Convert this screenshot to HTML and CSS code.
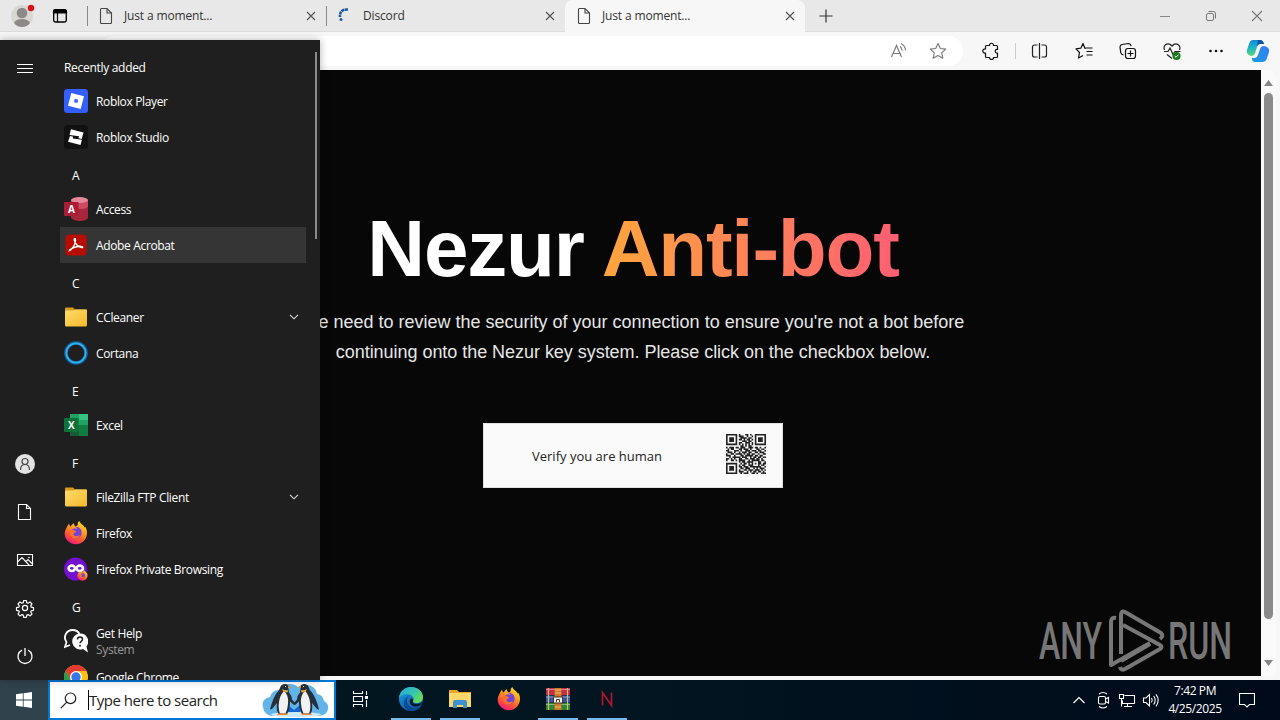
FILE: index.html
```html
<!DOCTYPE html>
<html lang="en">
<head>
    <meta charset="UTF-8">
    <title>Just a moment...</title>
    <link rel="stylesheet" href="styles.css">
</head>
<body>
    <!-- shared icons -->
    <svg class="defs" width="0" height="0">
        <defs>
            <linearGradient id="ffFlame" x1="0.8" y1="0" x2="0.3" y2="1">
                <stop offset="0" stop-color="#ffe226"/>
                <stop offset="0.4" stop-color="#ff9a1f"/>
                <stop offset="0.75" stop-color="#ff4a3c"/>
                <stop offset="1" stop-color="#f0168a"/>
            </linearGradient>
            <linearGradient id="folderFront" x1="0" y1="0" x2="1" y2="1">
                <stop offset="0" stop-color="#ffdc6b"/>
                <stop offset="1" stop-color="#f5b82a"/>
            </linearGradient>
            <linearGradient id="edgeBlue" x1="0" y1="0" x2="0.6" y2="1">
                <stop offset="0" stop-color="#1ea2e0"/>
                <stop offset="1" stop-color="#0b55a5"/>
            </linearGradient>
            <linearGradient id="edgeGreen" x1="0" y1="0" x2="1" y2="0.6">
                <stop offset="0" stop-color="#27a8de"/>
                <stop offset="0.6" stop-color="#35c4b0"/>
                <stop offset="1" stop-color="#66dd55"/>
            </linearGradient>
            <linearGradient id="copA" x1="0" y1="0" x2="0" y2="1">
                <stop offset="0" stop-color="#1686d8"/>
                <stop offset="0.5" stop-color="#20b6c4"/>
                <stop offset="1" stop-color="#5fd57a"/>
            </linearGradient>
            <linearGradient id="copB" x1="1" y1="0" x2="0" y2="1">
                <stop offset="0" stop-color="#3a7df0"/>
                <stop offset="1" stop-color="#169be6"/>
            </linearGradient>
            <symbol id="page" viewBox="0 0 14 18">
                <path d="M1.5 2.5q0-1 1-1H8L12.5 6v9.500q0 1-1 1h-9q-1 0-1-1zM8 1.500V6h4.500" fill="none" stroke="#444" stroke-width="1.100"/>
            </symbol>
            <symbol id="cross" viewBox="0 0 10 10">
                <path d="M1 1l8 8M9 1l-8 8" fill="none" stroke="#555" stroke-width="1.200"/>
            </symbol>
            <symbol id="folder" viewBox="0 0 24 24">
                <path d="M1 3.500q0-1 1-1h7l2 2h11q1 0 1 1V12H1z" fill="#d79a1c"/>
                <path d="M1 6.500q0-1 1-1h7.500l2-1H22q1 0 1 1V20q0 1.500-1.500 1.500h-19Q1 21.500 1 20z" fill="url(#folderFront)"/>
            </symbol>
            <symbol id="firefox" viewBox="0 0 24 24">
                <path d="M2.200 7.500C3 5.500 4 4 5 2.500c.3 1.500.8 2.300 1.600 3C7.500 4 8.500 3 10 2.300c0 1.500.5 2.500 1.700 3.200 1-.6 1.600-1 2-1.500-.3-1.500.3-3 1.600-4 .6 2 2.500 3 4 4.500.7.700 1 1.400 1.200 2l.7-.8c1.300 2 2 4.300 1.800 6.800-.4 6.300-5.200 10.800-11 10.800S.8 18.700.7 12.800c0-2 .5-3.800 1.500-5.300z" fill="url(#ffFlame)"/>
                <path d="M7 9.500c2-2 4-2.300 6.500-1.500-1-1.600-2-2-3-2 4-1 8 2.300 7 7-.7 3.200-3.400 4.700-6 4.500-3.300-.3-5.300-2.800-5-5.200z" fill="#7444d8"/>
                <path d="M6.300 9.500c2-1.300 3.200-.5 4.500.2l1.500.6c-.3 1.200-2.200 1.500-2.700 2.500-.4 1.400 1 2.700 3 2.500 1.500-.2 2.400-1 3.400-.7-1 2.600-4 3.600-6.500 2.700-3-1-4.200-4.800-3.200-7.800z" fill="#ff7129"/>
            </symbol>
            <symbol id="chevron" viewBox="0 0 10 6">
                <path d="M1 .8l4 4 4-4" fill="none" stroke="#ddd" stroke-width="1.100"/>
            </symbol>
            <!-- one penguin, mirrored for its partner -->
            <symbol id="penguin" viewBox="0 0 26 36">
                <path d="M11 6q1-4 5-4 3 0 3.500 2.500 0 4 .5 6 3 3 3 7l4 4.500-2 1-4-3.500q0 8-3 12.500H9.500Q7 29 8 21l-5 6-2 .5q3-12 7-17 2.500-2 3-4.500z" fill="#25303b"/>
                <path d="M15 9q5 4 4 13-.5 6-2.500 9.500H11Q9 27 10 20t5-11z" fill="#f1f1f1"/>
                <path d="M13 7q3 2 6 1l-.5 2.500-4-.5z" fill="#f0a83a"/>
                <path d="M19 4.200l4 1.300-4 .7zM9 31.500h9.500v1.500H8z" fill="#ee8b33"/>
                <circle cx="16.500" cy="4.500" r=".6" fill="#fff"/>
            </symbol>
        </defs>
    </svg>

    <div class="desktop">
        <div class="browser">
            <div class="tabstrip">
                <svg class="profile" width="32" height="32" viewBox="0 0 32 32">
                    <circle cx="16" cy="16" r="11" fill="#d9d6d3"/>
                    <circle cx="16" cy="13" r="5.300" fill="#8d8986"/>
                    <path d="M8 23q2-4 8-4t8 4q-3 4-8 4t-8-4z" fill="#8d8986"/>
                    <circle cx="25" cy="8" r="3.200" fill="#d90f1b"/>
                </svg>
                <svg class="workspaces" width="16" height="16" viewBox="0 0 16 16">
                    <rect x="1.700" y="2" width="12.600" height="12" rx="2" fill="none" stroke="#000" stroke-width="1.300"/>
                    <path d="M1.500 5V3.500q0-2 2-2h9q2 0 2 2V5zM5.500 5v9" stroke="#000" stroke-width="1.200"/>
                </svg>
                <div class="tab first">
                    <svg class="fav" width="14" height="18"><use href="#page"/></svg>
                    <span class="title">Just a moment...</span>
                    <svg width="10" height="10"><use href="#cross"/></svg>
                </div>
                <div class="tab second">
                    <svg class="fav" width="14" height="18" viewBox="0 0 14 18">
                        <path d="M10 2.500Q1.500 2 2 10" fill="none" stroke="#1b5c9e" stroke-width="2.600" stroke-dasharray="3.200 .5"/>
                        <circle cx="3" cy="12.500" r="1.500" fill="#1b5c9e"/>
                    </svg>
                    <span class="title">Discord</span>
                    <svg width="10" height="10"><use href="#cross"/></svg>
                </div>
                <div class="tab active">
                    <svg class="fav" width="14" height="18"><use href="#page"/></svg>
                    <span class="title">Just a moment...</span>
                    <svg width="10" height="10"><use href="#cross"/></svg>
                </div>
                <svg class="newtab" width="14" height="14" viewBox="0 0 14 14">
                    <path d="M7 .5v13M.5 7h13" stroke="#333" stroke-width="1.200"/>
                </svg>
                <div class="winbuttons">
                    <svg width="46" height="32" viewBox="0 0 46 32"><path d="M18 16.500h10" stroke="#888"/></svg>
                    <svg width="46" height="32" viewBox="0 0 46 32">
                        <g fill="none" stroke="#777">
                            <rect x="18.500" y="13.500" width="7" height="7" rx="1.500"/>
                            <path d="M20.500 11.500h5q2 0 2 2v5"/>
                        </g>
                    </svg>
                    <svg width="46" height="32" viewBox="0 0 46 32"><path d="M18 11l10 10M28 11L18 21" stroke="#777" stroke-width="1.100"/></svg>
                </div>
            </div>

            <div class="toolbar">
                <div class="address">
                    <svg width="40" height="30" viewBox="0 0 40 30">
                        <g fill="none" stroke="#777" stroke-width="1.100">
                            <path d="M13.500 21L18.500 9.500 23.500 21M15.200 17.500h6.600"/>
                            <path d="M22 10.500q2 1.500 2 4M23 7.500q4.500 2.500 4.500 7"/>
                        </g>
                    </svg>
                    <svg width="40" height="30" viewBox="0 0 40 30">
                        <path d="M20 7.500l2.300 5 5.400.6-4 3.700 1.100 5.400-4.800-2.700-4.800 2.700 1.100-5.400-4-3.700 5.400-.6z" fill="none" stroke="#777" stroke-width="1.100" stroke-linejoin="round"/>
                    </svg>
                </div>
                <svg class="ext" width="44" height="30" viewBox="0 0 44 30">
                    <path d="M17.500 9.500h3c-.4-3 4.400-3 4 0h3q1 0 1 1v3c-3-.7-3 4 0 3.500v3.500q0 1-1 1h-3c.5 2.600-4.300 2.600-4 0h-3q-1 0-1-1V17c-3.600.5-3.600-4.500 0-4v-2.500q0-1 1-1z" fill="none" stroke="#111" stroke-width="1.200" stroke-linejoin="round"/>
                </svg>
                <span class="sep"></span>
                <svg width="44" height="30" viewBox="0 0 44 30">
                    <path d="M19.500 9H16.500q-2 0-2 2v8q0 2 2 2h3M23.500 9h3q2 0 2 2v8q0 2-2 2h-3M21.500 7v16" fill="none" stroke="#222" stroke-width="1.200"/>
                </svg>
                <svg width="44" height="30" viewBox="0 0 44 30">
                    <path d="M23.500 12.500h-.500l-2-5-2.200 4.700-4.800.6 3.500 3.700-1 5.500 4.500-2.500M23.500 12h7M24.500 15.500h6M24.500 19h6" fill="none" stroke="#111" stroke-width="1.200" stroke-linejoin="round"/>
                </svg>
                <svg width="44" height="30" viewBox="0 0 44 30">
                    <g fill="none" stroke="#111" stroke-width="1.200">
                        <path d="M17.500 19q-2.500-.5-2.800-2.500L14 11q0-2 2-2.500l6.500-1q2 0 2.600 2.500"/>
                        <rect x="19.500" y="12.500" width="10" height="10" rx="2.500"/>
                        <path d="M24.500 14.500v6M21.500 17.500h6"/>
                    </g>
                </svg>
                <svg width="44" height="30" viewBox="0 0 44 30">
                    <path d="M14.500 14q-1.300-3.500 1-5.300Q19 6.500 22 10q3-3.500 6.300-1.300 2.500 2 1.200 5.300M17 18.500l5 4M14 15.500h4l2-3.500 3 6.500 2-3h5.500" fill="none" stroke="#222" stroke-width="1.200"/>
                    <circle cx="26.500" cy="20" r="4" fill="#187a1c"/>
                    <path d="M24.700 20l1.300 1.300 2.400-2.600" fill="none" stroke="#fff"/>
                </svg>
                <svg width="44" height="30" viewBox="0 0 44 30">
                    <g fill="#111"><circle cx="16.500" cy="15" r="1.300"/><circle cx="22" cy="15" r="1.300"/><circle cx="27.500" cy="15" r="1.300"/></g>
                </svg>
                <svg width="42" height="30" viewBox="0 0 42 30">
                    <path d="M15 4h7q3 0 4 4h-4q-2 0-3 3l-2 6q-1 3-4 3-5-1-4-6l2-6q1-4 4-4z" fill="url(#copA)"/>
                    <path d="M20 4h2q3 0 4 4h-4q-2 0-3 2z" fill="#0f55a8"/>
                    <path d="M24 26h-7q-3 0-3-4h3q2 0 3-3l2-6q1-3 4-3 6 1 5 6l-2 6q-1 4-5 4z" fill="url(#copB)"/>
                </svg>
            </div>

            <div class="viewport">
                <div class="page">
                    <h1>Nezur <span>Anti-bot</span></h1>
                    <p>We need to review the security of your connection to ensure you're not a bot before<br><span>continuing onto the Nezur key system. Please click on the checkbox below.</span></p>
                    <div class="captcha">
                        <span>Verify you are human</span>
                        <svg id="qr" width="40" height="40" viewBox="0 0 25 25"></svg>
                    </div>
                </div>
                <div class="scrollbar">
                    <svg width="9" height="6" viewBox="0 0 9 6"><path d="M0 6L4.500 0 9 6z" fill="#858585"/></svg>
                    <div class="thumb"></div>
                    <svg width="9" height="6" viewBox="0 0 9 6"><path d="M0 0l4.500 6L9 0z" fill="#858585"/></svg>
                </div>
            </div>
        </div>

        <svg class="watermark" width="200" height="70" viewBox="0 0 200 70">
            <g fill="#777" class="wm-text">
                <text x="2" y="51" textLength="63" lengthAdjust="spacingAndGlyphs">ANY</text>
                <text x="131" y="51" textLength="64" lengthAdjust="spacingAndGlyphs">RUN</text>
            </g>
            <g fill="none" stroke="#777" stroke-width="4" stroke-linejoin="round">
                <path d="M79 10q-5-1-5 4v43l39-22M84 46V7q0-5 4-3l36 21q3 3-1 6"/>
                <path d="M86 17l37 20q3 2 0 4L88 61q-4 2-5-2M113 36L84 53"/>
            </g>
        </svg>

        <div class="startmenu">
            <div class="rail">
                <svg width="50" height="48" viewBox="0 0 50 48"><path d="M17 20.500h16M17 24.500h16M17 28.500h16" stroke="#fff"/></svg>
                <span class="fill"></span>
                <svg width="50" height="48" viewBox="0 0 50 48">
                    <circle cx="25" cy="24" r="10" fill="#e3e3e3"/>
                    <g fill="none" stroke="#444" stroke-width="1.200"><circle cx="25" cy="21.500" r="3"/><path d="M20.500 30q0-5.500 4.500-5.500t4.500 5.500"/></g>
                </svg>
                <svg width="50" height="48" viewBox="0 0 50 48"><path d="M18.500 16.500h8l4 4v11h-12zM26.500 16.500v4h4" fill="none" stroke="#fff" stroke-width="1.100"/></svg>
                <svg width="50" height="48" viewBox="0 0 50 48">
                    <path d="M17.500 18.500h15v11h-15zM17.500 26l4.500-4.500 7.500 8M26 25.500l2-2 4.500 4.500" fill="none" stroke="#fff" stroke-width="1.100"/>
                    <circle cx="29" cy="21.500" r=".8" fill="#fff"/>
                </svg>
                <svg width="50" height="48" viewBox="0 0 50 48">
                    <g fill="none" stroke="#fff" stroke-width="1.200" stroke-linejoin="round">
                        <circle cx="25" cy="24" r="2.600"/>
                        <path d="M23.700 16.500h2.600l.5 2.300 1.300.5 2-1.300 1.900 1.900-1.300 2 .5 1.300 2.300.5v2.600l-2.300.500-.5 1.200 1.300 2-1.900 1.900-2-1.300-1.300.5-.5 2.300h-2.600l-.5-2.300-1.300-.5-2 1.300-1.900-1.900 1.300-2-.5-1.200-2.300-.5v-2.600l2.300-.5.5-1.300-1.300-2 1.900-1.900 2 1.300 1.300-.5z"/>
                    </g>
                </svg>
                <svg width="50" height="48" viewBox="0 0 50 48"><path d="M22 18.200a7 7 0 1 0 6 0M25 16v8" fill="none" stroke="#fff" stroke-width="1.300"/></svg>
            </div>

            <div class="apps">
                <div class="group recent">Recently added</div>
                <div class="app">
                    <svg width="24" height="24" viewBox="0 0 24 24">
                        <rect width="24" height="24" rx="3.500" fill="#335fff"/>
                        <path d="M7.300 4L20 7.300 16.700 20 4 16.700zM10.800 9.800l-.8 3.400 3.400.9.800-3.400z" fill="#fff" fill-rule="evenodd"/>
                    </svg>
                    <span>Roblox Player</span>
                </div>
                <div class="app">
                    <svg width="24" height="24" viewBox="0 0 24 24">
                        <rect width="24" height="24" rx="3.500" fill="#111"/>
                        <path d="M7 4.300L19.500 7.500 17.700 14l-3.200-.8.500-2-9.500-1.200zM6 11l3.200.8-.5 1.700 9.200 1.300L16.500 20 4 16.800z" fill="#fff"/>
                    </svg>
                    <span>Roblox Studio</span>
                </div>
                <div class="group">A</div>
                <div class="app">
                    <svg width="24" height="24" viewBox="0 0 24 24">
                        <path d="M7 3v18q3 3 9 3t8-3V3z" fill="#a8263c"/>
                        <path d="M7 9q4 3 10 3t7-3V3H7z" fill="#cf4a60"/>
                        <ellipse cx="15.500" cy="3" rx="8.500" ry="3" fill="#e8879a"/>
                        <rect y="5" width="14.500" height="14" rx="1" fill="#ab1c35"/>
                        <text x="7.200" y="15.700" text-anchor="middle" class="letter">A</text>
                    </svg>
                    <span>Access</span>
                </div>
                <div class="app hover">
                    <svg width="24" height="24" viewBox="0 0 24 24">
                        <rect x="1.500" y="1.500" width="21" height="21" rx="4" fill="#b80d05"/>
                        <path d="M5.500 17.500c2-.3 5.800-5 6-10.500 0-2-1.400-2-1.200 0 .4 3.500 4.500 8 8.200 7.500 1-1.500-5.500-2.500-12.500 2z" fill="none" stroke="#fff" stroke-width="1.400"/>
                    </svg>
                    <span>Adobe Acrobat</span>
                </div>
                <div class="group">C</div>
                <div class="app">
                    <svg width="24" height="24"><use href="#folder"/></svg>
                    <span>CCleaner</span>
                    <svg class="more" width="10" height="6"><use href="#chevron"/></svg>
                </div>
                <div class="app">
                    <svg width="24" height="24" viewBox="0 0 24 24">
                        <circle cx="12" cy="12" r="10" fill="none" stroke="#0b66ab" stroke-width="3.600"/>
                        <circle cx="12" cy="12" r="9.700" fill="none" stroke="#35b0e6" stroke-width="1.800"/>
                    </svg>
                    <span>Cortana</span>
                </div>
                <div class="group">E</div>
                <div class="app">
                    <svg width="24" height="24" viewBox="0 0 24 24">
                        <rect x="6" y="1" width="18" height="22" rx="1" fill="#107c41"/>
                        <rect x="6" y="1" width="9" height="11" fill="#21a366"/>
                        <rect x="15" y="1" width="9" height="6" fill="#33c481"/>
                        <rect x="15" y="7" width="9" height="5" fill="#21a366"/>
                        <rect x="6" y="17" width="18" height="6" fill="#185c37"/>
                        <rect x="15" y="17" width="9" height="6" fill="#107c41"/>
                        <rect y="5" width="14.500" height="14" rx="1" fill="#0f7038"/>
                        <text x="7.200" y="15.700" text-anchor="middle" class="letter">X</text>
                    </svg>
                    <span>Excel</span>
                </div>
                <div class="group">F</div>
                <div class="app">
                    <svg width="24" height="24"><use href="#folder"/></svg>
                    <span>FileZilla FTP Client</span>
                    <svg class="more" width="10" height="6"><use href="#chevron"/></svg>
                </div>
                <div class="app">
                    <svg width="24" height="24"><use href="#firefox"/></svg>
                    <span>Firefox</span>
                </div>
                <div class="app">
                    <svg width="24" height="24" viewBox="0 0 24 24">
                        <circle cx="11.500" cy="12" r="11.500" fill="#7410cf"/>
                        <g fill="none" stroke="#fff" stroke-width="2.600">
                            <ellipse cx="7.800" cy="11.300" rx="3.200" ry="2.700"/>
                            <ellipse cx="15.800" cy="11.300" rx="3.200" ry="2.700"/>
                        </g>
                        <use href="#firefox" x="13" y="13" width="11" height="11"/>
                    </svg>
                    <span>Firefox Private Browsing</span>
                </div>
                <div class="group">G</div>
                <div class="app">
                    <svg width="24" height="24" viewBox="0 0 24 24">
                        <path d="M8.500 1a7.500 7.500 0 0 0-6 12l-1.500 5 5-2M8.500 1q5 0 7 4" fill="none" stroke="#fff" stroke-width="1.800"/>
                        <path d="M16 4.500a8 8 0 1 0 3 15.500l5 3.500-1.500-6A8 8 0 0 0 16 4.500z" fill="#fff"/>
                        <path d="M13.500 10.500q0-2.500 2.500-2.500t2.500 2.300q0 1.200-1.300 2-1.200.8-1.200 2" fill="none" stroke="#1f1f1f" stroke-width="1.500"/>
                        <circle cx="16" cy="16.700" r="1" fill="#1f1f1f"/>
                    </svg>
                    <span>Get Help<small>System</small></span>
                </div>
                <div class="app">
                    <svg width="24" height="24" viewBox="0 0 24 24">
                        <circle cx="12" cy="12" r="12" fill="#fbc116"/>
                        <path d="M1.600 6A12 12 0 0 1 22.400 6H12L6.800 15z" fill="#e53a2f"/>
                        <path d="M1.600 6A12 12 0 0 0 12 24l5.200-9H6.800z" fill="#2b9a47"/>
                        <circle cx="12" cy="12" r="6" fill="#fff"/>
                        <circle cx="12" cy="12" r="4.700" fill="#3577e5"/>
                    </svg>
                    <span>Google Chrome</span>
                </div>
            </div>
            <div class="menuscroll"></div>
        </div>

        <div class="taskbar">
            <div class="start">
                <svg width="16" height="16" viewBox="0 0 16 16"><path d="M0 2.300l6.800-1v6.300H0zM7.600 1.200L16 0v7.600H7.600zM0 8.400h6.800v6.300l-6.800-1zM7.600 8.400H16V16l-8.400-1.200z" fill="#fff"/></svg>
            </div>
            <div class="search">
                <svg width="17" height="17" viewBox="0 0 17 17"><circle cx="10.500" cy="6.300" r="5.300" fill="none" stroke="#222" stroke-width="1.200"/><path d="M6.800 10.200L.8 16.200" stroke="#222" stroke-width="1.200"/></svg>
                <span class="caret"></span>
                <span class="hint">Type here to search</span>
                <svg class="penguins" width="68" height="36" viewBox="0 0 68 36">
                    <path d="M1 25Q-1 17 8 15 10 8 17 8q2-6 10-6 6 0 9 3 6-4 13-1 5 2 6 8 6 1 7 7 5 3 4 8-1 6-9 7H10Q2 33 1 25z" fill="#62b4e8"/>
                    <ellipse cx="34" cy="32.500" rx="25" ry="2.500" fill="#cfe9f8"/>
                    <path d="M26 23l6 5 6-5v7H26z" fill="#1267d3"/>
                    <use href="#penguin" x="7" y="0" width="26" height="36"/>
                    <use href="#penguin" x="-58" y="0" width="26" height="36" transform="scale(-1 1)"/>
                </svg>
            </div>
            <div class="task">
                <svg width="18" height="16" viewBox="0 0 18 16"><path d="M1.500 0v2.500h9V0M1.500 16v-2.500h9V16M1.500 5.500h9v5h-9zM14.500 0v4M14.500 9v7" fill="none" stroke="#fff" stroke-width="1.100"/><path d="M13 5h3v3h-3z" fill="#fff"/></svg>
            </div>
            <div class="task open">
                <svg width="24" height="24" viewBox="0 0 24 24">
                    <circle cx="12" cy="12" r="12" fill="url(#edgeBlue)"/>
                    <path d="M0 11C1 4 6 0 12 0c7 0 12 4.500 12 10 0 4-3 6-6.500 6-2.500 0-4-1-3.500-2 1.500-2 .5-5.500-4-6.500C5 6.500 1 9 0 11z" fill="url(#edgeGreen)"/>
                    <path d="M10 9c-4 3-2.500 10 4 12 3 .8 6 0 8-2-3 5-9 6-13.500 4C3 20 4 11 10 9z" fill="#0c4a91"/>
                    <path d="M14 14c-.8 1 0 3 4 3 2 0 4-.8 5.500-2-1 3-4 5-7.500 4.500-4.500-.6-6.500-4-4.500-7.500 1-1.500 3.500 0 2.500 2z" fill="#041a27"/>
                </svg>
            </div>
            <div class="task open">
                <svg width="24" height="24" viewBox="0 0 24 24">
                    <path d="M1 3h8l2 2h12v15H1z" fill="#e3a72d"/>
                    <path d="M1 6h22v14H1z" fill="#fbd86c"/>
                    <path d="M5 21v-6q0-2 2-2h10q2 0 2 2v6h-4v-3H9v3z" fill="#3d92cf"/>
                </svg>
            </div>
            <div class="task">
                <svg width="24" height="24"><use href="#firefox"/></svg>
            </div>
            <div class="task open">
                <svg width="24" height="24" viewBox="0 0 24 24">
                    <rect y="1" width="24" height="7" fill="#c42d4b"/>
                    <rect y="8.500" width="24" height="7" fill="#3557a8"/>
                    <rect y="16" width="24" height="7" fill="#2c8436"/>
                    <path d="M0 2.500h24M0 10h24M0 17.500h24" stroke="#fff" stroke-opacity=".4"/>
                    <path d="M2.500 1v22M21.500 1v22" stroke="#d8bb60" stroke-width="1.200"/>
                    <rect x="8.500" y="1" width="7" height="22" fill="#cd7a2b"/>
                    <path d="M9 3h6M9 6h6M9 20h6" stroke="#f2c36a"/>
                    <rect x="7.500" y="10" width="9" height="6" fill="#eee" stroke="#4b3520"/>
                    <path d="M10.500 15v-2.500h3V15" fill="none" stroke="#4b3520"/>
                </svg>
            </div>
            <div class="task open">
                <svg width="24" height="24" viewBox="0 0 24 24">
                    <path d="M7.500 18.500v-13l9 13v-13" fill="none" stroke="#b3142f" stroke-width="1.700"/>
                </svg>
            </div>
            <span class="fill"></span>
            <div class="tray">
                <svg width="24" height="40" viewBox="0 0 24 40"><path d="M6.500 23l5.500-5.500 5.500 5.500" fill="none" stroke="#fff" stroke-width="1.200"/></svg>
                <svg width="24" height="40" viewBox="0 0 24 40"><g fill="none" stroke="#fff" stroke-width="1.100"><rect x="7.500" y="16.500" width="7" height="7.500" rx="1.500"/><path d="M14.500 19l3-1.500v5.500l-3-1.500M8 14q4-3 8 0M8 26.500q4 3 8 0"/></g></svg>
                <svg width="24" height="40" viewBox="0 0 24 40"><path d="M9.500 15.500h10v8h-12v-3M4.500 14.500h4v4h-4zM6.500 18.500v8M12.500 23.500v3M9 26.500h8" fill="none" stroke="#fff" stroke-width="1.100"/></svg>
                <svg width="24" height="40" viewBox="0 0 24 40"><path d="M4.500 18h2.500l3.500-3.500v11.500L7 22.500H4.500zM12.500 18q1.500 2.200 0 4.500M14.700 16q3 4.200 0 8.500M17 14.300q4.500 6 0 12" fill="none" stroke="#fff" stroke-width="1.100"/></svg>
            </div>
            <div class="clock">7:42 PM<br>4/25/2025</div>
            <div class="notif">
                <svg width="16" height="16" viewBox="0 0 16 16"><path d="M.500 1.500h15v11h-5l-2.500 2.500-2.500-2.500h-5z" fill="none" stroke="#fff" stroke-width="1.100"/></svg>
            </div>
        </div>
    </div>

    <script>
        const rows = [
            "1111111010001101001111111",
            "1000001011100100101000001",
            "1011101001111011001011101",
            "1011101011010110101011101",
            "1011101000111011001011101",
            "1000001011001110101000001",
            "1111111010101010101111111",
            "0000000001101011000000000",
            "1011101101110011101101001",
            "0101100011011101000110110",
            "1100011101001110111011001",
            "0111010010111011001101110",
            "1001101111010110110010011",
            "1110010001101111101101100",
            "0010111110111001011011011",
            "1101010011001101110110100",
            "1001101011110010111110110",
            "0000000010110111100011001",
            "1111111001011010101011011",
            "1000001010110011100010110",
            "1011101011011101111111001",
            "1011101001101110010101110",
            "1011101010011011101110101",
            "1000001011100101011011010",
            "1111111001011100110100111"
        ];

        let d = "";
        rows.forEach((row, y) => {
            for (let x = 0; x < row.length; x++) {
                if (row[x] === "1") d += "M" + x + " " + y + "h1v1h-1z";
            }
        });
        const path = document.createElementNS("http://www.w3.org/2000/svg", "path");
        path.setAttribute("d", d);
        path.setAttribute("fill", "#222");
        document.getElementById("qr").appendChild(path);
    </script>
</body>
</html>
```
FILE: styles.css
```css
* { box-sizing: border-box; }
body { margin: 0; overflow: hidden; font-family: "Open Sans", "Noto Sans", sans-serif; font-size: 12px; }
svg { display: block; flex: none; }
.defs { position: absolute; }
.fill { flex: 1; }

.desktop { position: relative; width: 1280px; height: 720px; display: flex; flex-direction: column; }

/* browser */
.browser { flex: 1; display: flex; flex-direction: column; background: #f7f7f7; min-height: 0; }
.tabstrip { height: 32px; display: flex; align-items: center; background: #e8e8e8; border-bottom: 1px solid #dcdcdc; }
.profile { margin-left: 6px; }
.workspaces { margin: 0 19px 0 14px; }
.tab { height: 32px; width: 239px; display: flex; align-items: center; padding: 0 10px 0 12px; color: #333; }
.tab .title { flex: 1; margin-left: 11px; letter-spacing: -0.15px; }
.tab.first, .tab.second { background: linear-gradient(#888, #888) 0 50% / 1px 20px no-repeat; }
.tab.active { width: 240px; background: #f7f7f7; border-radius: 8px 8px 0 0; }
.newtab { margin-left: 14px; }
.winbuttons { display: flex; margin-left: auto; }

.toolbar { height: 38px; display: flex; align-items: center; }
.address { width: 863px; height: 30px; margin-left: 100px; padding-right: 5px; background: #fff; border-radius: 15px; display: flex; justify-content: flex-end; }
.ext { margin-left: 6px; }
.sep { width: 1px; height: 16px; margin: 0 2px; background: #ccc; }

.viewport { flex: 1; display: flex; margin-bottom: 4px; padding: 0 4px 0 5px; min-height: 0; }
.page { flex: 1; background: #070707; text-align: center; font-family: "Liberation Sans", sans-serif; }
h1 { margin: 134px 0 0; font-size: 80px; line-height: 90px; letter-spacing: -1.2px; color: #fff; }
h1 span { background: linear-gradient(90deg, #ffa63d, #ff5e73); -webkit-background-clip: text; background-clip: text; color: transparent; }
.page p { margin: 13px -20px 0; font-size: 18px; line-height: 30px; color: #e6e6e6; white-space: nowrap; }
.page p span { letter-spacing: -0.04px; }
.captcha { width: 300px; height: 65px; margin: 56px auto 0; padding: 0 16px 3px 48px; background: #fafafa; border: 1px solid #e0e0e0; display: flex; align-items: center; justify-content: space-between; font-family: "Open Sans", sans-serif; font-size: 13px; color: #232323; }
.captcha span { padding-top: 4px; }
.scrollbar { width: 15px; background: #fafafa; border-radius: 0 8px 8px 0; display: flex; flex-direction: column; align-items: center; padding: 10px 0 10px; }
.thumb { width: 9px; height: 526px; margin: 7px 0 auto; border-radius: 5px; background: #8b8b8b; }

.watermark { position: absolute; left: 1037px; top: 608px; overflow: visible; }
.wm-text { font-family: "Roboto", sans-serif; font-size: 52px; font-weight: 500; }

/* start menu */
.startmenu { position: absolute; left: 0; top: 40px; width: 320px; height: 640px; overflow: hidden; display: flex; background: #1f1f1f; color: #fff; box-shadow: 0 0 8px rgba(0, 0, 0, 0.3); }
.rail { width: 50px; padding-top: 4px; display: flex; flex-direction: column; }
.apps { width: 246px; margin: 7px 0 0 10px; }
.group, .app { height: 36px; display: flex; align-items: center; }
.group { padding: 5px 0 0 12px; }
.group.recent { padding-left: 4px; letter-spacing: -0.3px; }
.app { padding: 0 7px 0 4px; letter-spacing: -0.35px; }
.app span { margin-left: 8px; padding-top: 2px; line-height: 16px; }
.app small { display: block; font-size: 12px; color: #999; }
.app .more { margin-left: auto; }
.app.hover { background: #353535; }
.letter { font: bold 10px "Open Sans", sans-serif; fill: #fff; }
.menuscroll { width: 2px; height: 187px; margin: 12px 0 0 9px; background: #8a8a8a; }

/* taskbar */
.taskbar { height: 40px; display: flex; background: linear-gradient(90deg, #02171f, #021521 50%, #000a1a); color: #fff; }
.start { width: 48px; display: flex; align-items: center; justify-content: center; background: #30424c; }
.search { width: 288px; display: flex; align-items: center; padding-left: 10px; background: #fff; border: 2px solid #0078d7; color: #222; }
.caret { width: 1px; height: 20px; margin-left: 11px; background: #000; }
.hint { flex: 1; font-size: 15px; letter-spacing: -0.5px; white-space: nowrap; }
.penguins { margin-right: 4px; }
.task { width: 40px; margin-right: 9px; display: flex; align-items: center; justify-content: center; border-bottom: 2px solid transparent; }
.search + .task { margin-left: 5px; margin-right: 10px; }
.task.open { border-color: #76b9ed; }
.tray { display: flex; }
.clock { width: 64px; line-height: 18px; padding-top: 2px; text-align: center; letter-spacing: -0.4px; }
.notif { width: 53px; display: flex; align-items: center; padding-left: 12px; }
```
